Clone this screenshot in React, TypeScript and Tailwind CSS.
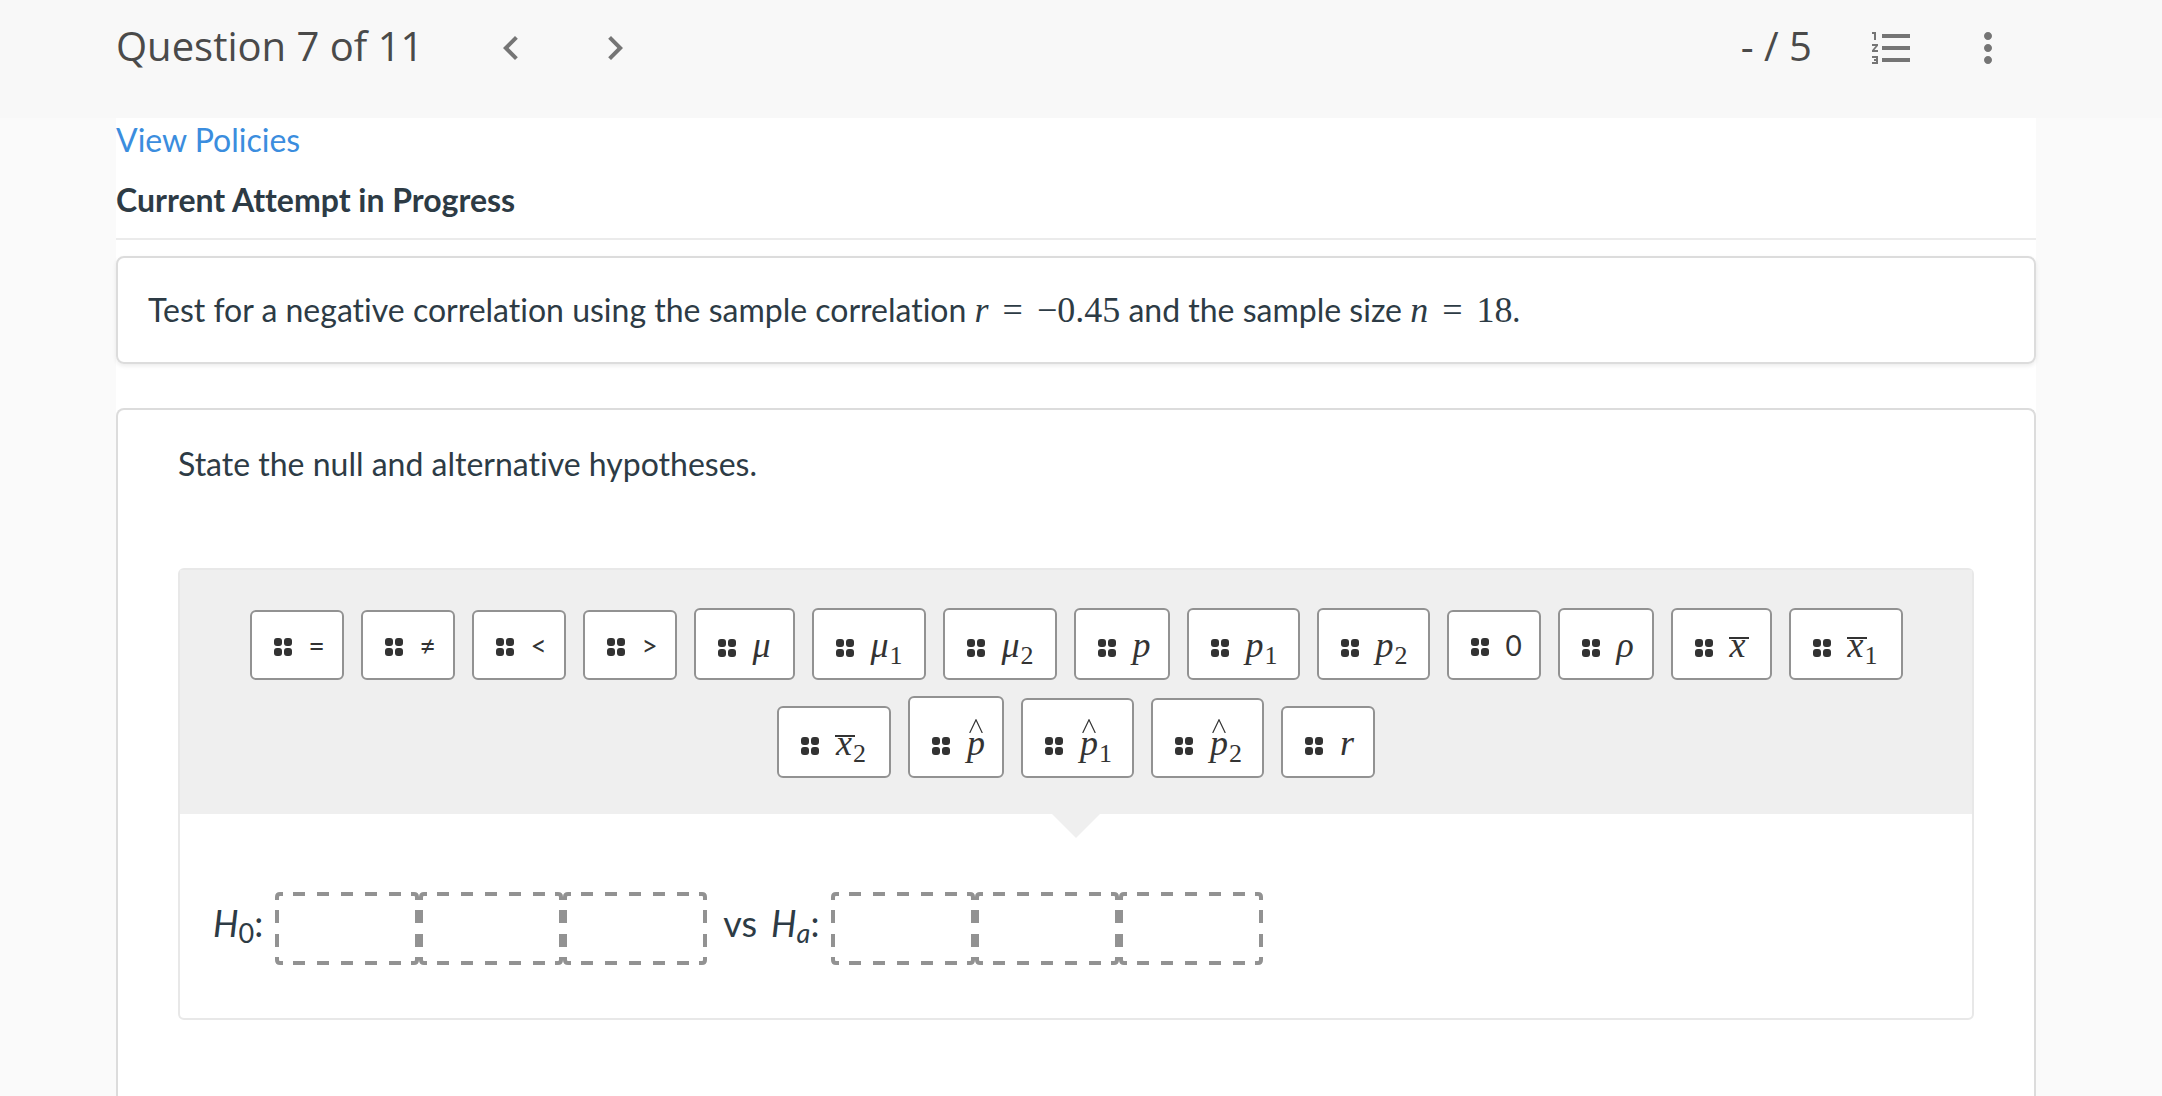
import type { ReactNode } from 'react';
import { clsx } from 'clsx';
import {
  MdChevronLeft,
  MdChevronRight,
  MdFormatListNumbered,
  MdMoreVert,
} from 'react-icons/md';

type Accent = 'bar' | 'hat';

interface Token {
  id: string;
  symbol: string;
  math?: boolean;
  sub?: string;
  accent?: Accent;
  size: string;
}

const tokens: Token[] = [
  { id: 'eq', symbol: '=', size: 'h-[70px] w-[94px]' },
  { id: 'neq', symbol: '≠', size: 'h-[70px] w-[94px]' },
  { id: 'lt', symbol: '<', size: 'h-[70px] w-[94px]' },
  { id: 'gt', symbol: '>', size: 'h-[70px] w-[94px]' },
  { id: 'mu', symbol: 'μ', math: true, size: 'h-[72px] w-[101px]' },
  { id: 'mu1', symbol: 'μ', sub: '1', math: true, size: 'h-[72px] w-[114px]' },
  { id: 'mu2', symbol: 'μ', sub: '2', math: true, size: 'h-[72px] w-[114px]' },
  { id: 'p', symbol: 'p', math: true, size: 'h-[72px] w-24' },
  { id: 'p1', symbol: 'p', sub: '1', math: true, size: 'h-[72px] w-[113px]' },
  { id: 'p2', symbol: 'p', sub: '2', math: true, size: 'h-[72px] w-[113px]' },
  { id: 'zero', symbol: '0', size: 'h-[70px] w-[94px]' },
  { id: 'rho', symbol: 'ρ', math: true, size: 'h-[72px] w-24' },
  { id: 'xbar', symbol: 'x', accent: 'bar', math: true, size: 'h-[72px] w-[101px]' },
  { id: 'xbar1', symbol: 'x', sub: '1', accent: 'bar', math: true, size: 'h-[72px] w-[114px]' },
  { id: 'xbar2', symbol: 'x', sub: '2', accent: 'bar', math: true, size: 'h-[72px] w-[114px]' },
  { id: 'phat', symbol: 'p', accent: 'hat', math: true, size: 'h-[82px] w-24' },
  { id: 'phat1', symbol: 'p', sub: '1', accent: 'hat', math: true, size: 'h-[80px] w-[113px]' },
  { id: 'phat2', symbol: 'p', sub: '2', accent: 'hat', math: true, size: 'h-[80px] w-[113px]' },
  { id: 'r', symbol: 'r', math: true, size: 'h-[72px] w-[94px]' },
];

function IconButton({ label, children }: { label: string; children: ReactNode }) {
  return (
    <button
      type="button"
      aria-label={label}
      className="flex h-12 w-12 items-center justify-center text-5xl text-[#757575]"
    >
      {children}
    </button>
  );
}

function DragHandle() {
  return (
    <svg viewBox="0 0 18 18" className="h-[18px] w-[18px] shrink-0 fill-[#333]" aria-hidden="true">
      <rect x="0" y="0" width="8" height="8" rx="3" />
      <rect x="10" y="0" width="8" height="8" rx="3" />
      <rect x="0" y="10" width="8" height="8" rx="3" />
      <rect x="10" y="10" width="8" height="8" rx="3" />
    </svg>
  );
}

function Chip({ token }: { token: Token }) {
  return (
    <button
      type="button"
      className={clsx(
        'flex items-end rounded-md border-2 border-[#929292] bg-white pb-[15px] pl-[22px] text-[#333]',
        token.size
      )}
    >
      <span className="flex h-9 items-baseline gap-[17px]">
        <DragHandle />
        {token.math ? (
          <span className="font-['Liberation_Serif',serif] text-4xl leading-9 italic">
            <span className="relative">
              {token.symbol}
              {token.accent === 'bar' && (
                <span className="absolute top-3 -left-px h-0.5 w-5 bg-[#333]" />
              )}
              {token.accent === 'hat' && (
                <svg
                  viewBox="0 0 14 14"
                  className="absolute -top-1 left-0.5 h-3.5 w-3.5 fill-none stroke-[#333]"
                  aria-hidden="true"
                >
                  <path d="M0.7 14 L7 0.8 L13.3 14" strokeWidth="1.2" />
                </svg>
              )}
            </span>
            {token.sub && <sub className="ml-px text-[26px] leading-none not-italic">{token.sub}</sub>}
          </span>
        ) : (
          <span className="text-[28px] leading-9">{token.symbol}</span>
        )}
      </span>
    </button>
  );
}

function DropSlot({ label }: { label: string }) {
  return (
    <div role="group" aria-label={label} className="h-[73px] w-36">
      <svg
        viewBox="0 0 144 73"
        className="h-full w-full fill-none stroke-[#929292]"
        strokeWidth="4"
        aria-hidden="true"
      >
        <path d="M18 2H128M18 71H128" strokeDasharray="12 12" />
        <path d="M2 18V56M142 18V56" strokeDasharray="13 11" />
        <path d="M2 8V5Q2 2 5 2H8M136 2H139Q142 2 142 5V8M2 65V68Q2 71 5 71H8M136 71H139Q142 71 142 68V65" />
      </svg>
    </div>
  );
}

function Slots({ name }: { name: string }) {
  return (
    <div className="flex">
      {[1, 2, 3].map((n) => (
        <DropSlot key={n} label={`${name}, position ${n}`} />
      ))}
    </div>
  );
}

export default function App() {
  return (
    <div className="flex min-h-screen flex-col bg-[#fafafa] font-[Lato,sans-serif] text-[32px] leading-10 text-[#2d3b45] [font-variant-ligatures:none]">
      <header className="flex h-[118px] items-start bg-[#f8f8f8] pt-6 pr-[150px] pl-[116px] font-['Open_Sans',sans-serif] text-[#4a4a4a]">
        <h1 className="mr-16 text-[40px] leading-[44px]">Question 7 of 11</h1>
        <nav aria-label="Questions" className="flex gap-14">
          <IconButton label="Previous question">
            <MdChevronLeft />
          </IconButton>
          <IconButton label="Next question">
            <MdChevronRight />
          </IconButton>
        </nav>
        <div className="ml-auto flex">
          <span className="mr-14 text-[40px] leading-[44px]">- / 5</span>
          <div className="flex gap-12">
            <IconButton label="Question list">
              <MdFormatListNumbered />
            </IconButton>
            <IconButton label="More options">
              <MdMoreVert />
            </IconButton>
          </div>
        </div>
      </header>

      <main className="mr-[126px] ml-[116px] flex flex-1 flex-col bg-white">
        <div className="border-b-2 border-[#ebebeb] pt-0.5 pb-[18px]">
          <a href="#policies" className="text-[#3b8dde]">
            View Policies
          </a>
          <h2 className="mt-5 font-bold">Current Attempt in Progress</h2>
        </div>

        <section className="mt-4 rounded-lg border-2 border-[#dcdcdc] px-[30px] py-8 shadow-[0_2px_4px_rgba(0,0,0,0.08)]">
          <p>
            Test for a negative correlation using the sample correlation{' '}
            <span className="font-['Liberation_Serif',serif] text-4xl leading-10">
              <i>r</i>
              <span className="mx-3.5">=</span>
              −0.45
            </span>{' '}
            and the sample size{' '}
            <span className="font-['Liberation_Serif',serif] text-4xl leading-10">
              <i>n</i>
              <span className="mx-3.5">=</span>
              18
            </span>
            .
          </p>
        </section>

        <section className="mt-11 flex-1 rounded-t-lg border-2 border-b-0 border-[#dcdcdc] px-[60px] pt-[34px]">
          <p>State the null and alternative hypotheses.</p>

          <div className="mt-[84px] rounded-md border-2 border-[#e8e8e8]">
            <div className="relative flex flex-wrap items-end justify-center gap-x-[17px] gap-y-4 bg-[#efefef] px-10 pt-[38px] pb-9">
              {tokens.map((token) => (
                <Chip key={token.id} token={token} />
              ))}
              <svg
                viewBox="0 0 48 24"
                className="absolute top-full left-1/2 h-6 w-12 -translate-x-1/2 fill-[#efefef]"
                aria-hidden="true"
              >
                <path d="M0 0H48L24 24Z" />
              </svg>
            </div>

            <div className="flex items-center pt-[78px] pb-[53px] pl-[33px] text-4xl">
              <span className="mr-3 pb-3">
                <i>H</i>
                <sub>0</sub>:
              </span>
              <Slots name="Null hypothesis" />
              <span className="mr-3.5 ml-4 pb-3">vs</span>
              <span className="mr-3 pb-3">
                <i>
                  H<sub>a</sub>
                </i>
                :
              </span>
              <Slots name="Alternative hypothesis" />
            </div>
          </div>
        </section>
      </main>
    </div>
  );
}
